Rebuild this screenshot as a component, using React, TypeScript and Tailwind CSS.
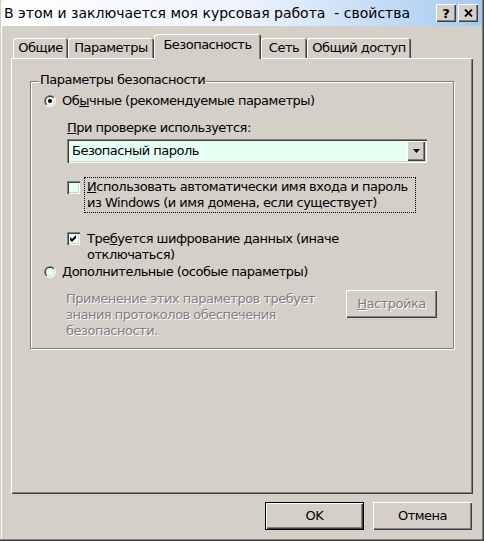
import type { ReactNode } from 'react'

const raised =
  'shadow-[inset_1px_1px_0_#fff,inset_-1px_-1px_0_#404040,inset_-2px_-2px_0_#808080]'
const sunken =
  'shadow-[inset_1px_1px_0_#808080,inset_2px_2px_0_#404040,inset_-1px_-1px_0_#fff,inset_-2px_-2px_0_#d4d0c8]'
const disabledText = 'text-[#808080] [text-shadow:1px_1px_0_#fff]'
const mint = 'bg-[#e6fff3]'

function Radio({ checked, id }: { checked?: boolean; id: string }) {
  return (
    <svg width="12" height="12" viewBox="0 0 12 12" className="shrink-0">
      <defs>
        <linearGradient id={`${id}-o`} x1="0" y1="0" x2="1" y2="1">
          <stop offset="0.5" stopColor="#808080" />
          <stop offset="0.5" stopColor="#ffffff" />
        </linearGradient>
        <linearGradient id={`${id}-i`} x1="0" y1="0" x2="1" y2="1">
          <stop offset="0.5" stopColor="#404040" />
          <stop offset="0.5" stopColor="#d4d0c8" />
        </linearGradient>
      </defs>
      <circle cx="6" cy="6" r="6" fill={`url(#${id}-o)`} />
      <circle cx="6" cy="6" r="5" fill={`url(#${id}-i)`} />
      <circle cx="6" cy="6" r="4" fill="#e6fff3" />
      {checked && <circle cx="6" cy="6" r="2" fill="#000" />}
    </svg>
  )
}

function Checkbox({ checked }: { checked?: boolean }) {
  return (
    <div className={`relative h-[13px] w-[13px] shrink-0 ${mint} ${sunken}`}>
      {checked && (
        <svg width="7" height="7" viewBox="0 0 7 7" className="absolute left-[3px] top-[3px]">
          <polygon points="0,2 2,4 6,0 6,3 2,7 0,5" fill="#000" />
        </svg>
      )}
    </div>
  )
}

function Tab({ children, width, selected }: { children: ReactNode; width: string; selected?: boolean }) {
  return (
    <div
      className={`flex justify-center rounded-t-[3px] bg-[#d4d0c8] shadow-[inset_1px_1px_0_#fff,inset_-1px_0_0_#404040,inset_-2px_0_0_#808080] ${width} ${
        selected ? 'relative z-10 -mb-[1px] h-[25px] pt-[4px]' : 'h-[20px] pt-[3px]'
      }`}
    >
      <span className="leading-[14px]">{children}</span>
    </div>
  )
}

function Button({ children, isDefault }: { children: ReactNode; isDefault?: boolean }) {
  return (
    <div
      className={`flex h-[28px] w-[99px] items-center justify-center bg-[#d4d0c8] ${
        isDefault ? 'border border-black' : ''
      }`}
    >
      <div className={`flex h-full w-full items-center justify-center ${raised}`}>{children}</div>
    </div>
  )
}

export default function App() {
  return (
    <div className="flex h-[541px] w-[484px] flex-col bg-[#d4d0c8] font-['DejaVu_Sans',sans-serif] text-[13px] leading-[16px] tracking-[-0.5px] text-black shadow-[inset_-1px_-1px_0_#404040,inset_-2px_-2px_0_#808080,inset_1px_1px_0_#d4d0c8,inset_2px_2px_0_#fff] select-none">
      {/* Title bar */}
      <div className="mx-[2px] flex h-[26px] items-center bg-linear-to-r from-white via-[#eef4fb] to-[#a6caf0] pl-[2px] pr-[4px]">
        <span className="flex-1 whitespace-pre text-[14px] tracking-normal">
          В этом и заключается моя курсовая работа  - свойства
        </span>
        <div className="flex gap-[2px]">
          <div className={`flex h-[18px] w-[20px] items-center justify-center bg-[#d4d0c8] ${raised}`}>
            <span className="text-[13px] font-bold leading-none tracking-normal">?</span>
          </div>
          <div className={`flex h-[18px] w-[20px] items-center justify-center bg-[#d4d0c8] ${raised}`}>
            <svg width="9" height="8" viewBox="0 0 9 8">
              <path d="M1 0.5 L8 7.5 M8 0.5 L1 7.5" stroke="#000" strokeWidth="1.8" />
            </svg>
          </div>
        </div>
      </div>

      {/* Tabs */}
      <div className="mt-[8px] flex h-[24px] items-end pl-[13px]">
        <Tab width="w-[55px]">Общие</Tab>
        <Tab width="w-[86px]">Параметры</Tab>
        <Tab width="w-[107px]" selected>
          Безопасность
        </Tab>
        <Tab width="w-[46px]">Сеть</Tab>
        <Tab width="w-[104px]">Общий доступ</Tab>
      </div>

      {/* Tab panel */}
      <div className="ml-[11px] flex h-[436px] w-[462px] flex-col shadow-[inset_1px_1px_0_#fff,inset_-1px_-1px_0_#404040,inset_-2px_-2px_0_#808080]">
        <div className="relative ml-[19px] mt-[23px] h-[268px] w-[424px] border border-[#808080] shadow-[inset_1px_1px_0_#fff,1px_1px_0_#fff]">
          <span className="absolute left-[8px] top-[-10px] bg-[#d4d0c8] px-[1px]">Параметры безопасности</span>

          <div className="flex flex-col pl-[13px] pt-[11px]">
            <div className="flex h-[16px] items-center gap-[6px]">
              <Radio id="r1" checked />
              <span>
                Об<span className="underline">ы</span>чные (рекомендуемые параметры)
              </span>
            </div>

            <div className="ml-[23px] mt-[11px] h-[16px]">
              <span className="underline">П</span>ри проверке используется:
            </div>

            <div className={`ml-[23px] mt-[3px] flex h-[24px] w-[360px] p-[2px] ${mint} ${sunken}`}>
              <span className="flex flex-1 items-center pl-[3px]">Безопасный пароль</span>
              <div className={`flex w-[18px] items-center justify-center bg-[#d4d0c8] ${raised}`}>
                <svg width="7" height="4" viewBox="0 0 7 4">
                  <polygon points="0,0 7,0 3.5,4" fill="#000" />
                </svg>
              </div>
            </div>

            <div className="ml-[23px] mt-[14px] flex items-start">
              <div className="mt-[4px]">
                <Checkbox />
              </div>
              <div className="ml-[4px] w-[332px] whitespace-nowrap border border-dotted border-black px-[2px] py-[1px]">
                <div>
                  <span className="underline">И</span>спользовать автоматически имя входа и пароль
                </div>
                <div>из Windows (и имя домена, если существует)</div>
              </div>
            </div>

            <div className="ml-[23px] mt-[17px] flex items-start">
              <div className="mt-[2px]">
                <Checkbox checked />
              </div>
              <div className="ml-[4px] whitespace-nowrap border border-transparent px-[2px]">
                <div>
                  Тре<span className="underline">б</span>уется шифрование данных (иначе
                </div>
                <div>отключаться)</div>
              </div>
            </div>

            <div className="flex h-[16px] items-center gap-[6px]">
              <Radio id="r2" />
              <span>
                <span className="underline">Д</span>ополнительные (особые параметры)
              </span>
            </div>

            <div className="mt-[11px] flex items-start">
              <div className={`ml-[22px] w-[280px] whitespace-nowrap ${disabledText}`}>
                <div>Применение этих параметров требует</div>
                <div>знания протоколов обеспечения</div>
                <div>безопасности.</div>
              </div>
              <div
                className={`-mt-[1px] flex h-[28px] w-[91px] items-center justify-center bg-[#d4d0c8] ${raised} ${disabledText}`}
              >
                <span>
                  <span className="underline">Н</span>астройка
                </span>
              </div>
            </div>
          </div>
        </div>
      </div>

      {/* Dialog buttons */}
      <div className="mt-[8px] flex justify-end gap-[9px] pr-[12px]">
        <Button isDefault>OK</Button>
        <Button>Отмена</Button>
      </div>
    </div>
  )
}
